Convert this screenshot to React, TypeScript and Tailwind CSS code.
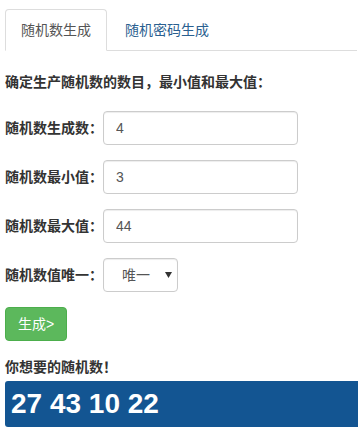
import { useState } from 'react';

const font = "font-['Liberation_Sans','Noto_Sans_CJK_SC',sans-serif]";

const fields = [
  { label: '随机数生成数：', value: '4' },
  { label: '随机数最小值：', value: '3' },
  { label: '随机数最大值：', value: '44' },
];

export default function App() {
  const [tab, setTab] = useState(0);
  const [values, setValues] = useState(fields.map((f) => f.value));
  const [unique, setUnique] = useState('唯一');

  return (
    <div className={`${font} min-h-[430px] bg-white pl-[5px] pt-[9px] text-[14px] leading-[20px] text-[#333]`}>
      {/* tabs */}
      <ul className="mr-px flex border-b border-[#ddd]">
        {['随机数生成', '随机密码生成'].map((t, i) => (
          <li key={t} className="-mb-px mr-[2px]">
            <button
              onClick={() => setTab(i)}
              className={
                i === tab
                  ? 'rounded-t-[4px] border border-[#ddd] border-b-transparent bg-white px-[15px] py-[10px] text-[#555]'
                  : 'rounded-t-[4px] border border-transparent px-[15px] py-[10px] text-[#2a6090]'
              }
            >
              {t}
            </button>
          </li>
        ))}
      </ul>

      <h5 className="mt-[21px] font-bold">确定生产随机数的数目，最小值和最大值：</h5>

      <div className="mt-[19px] flex flex-col gap-[15px]">
        {fields.map((f, i) => (
          <div key={f.label} className="grid grid-cols-[98px_auto] items-center">
            <label className="whitespace-nowrap font-bold">{f.label}</label>
            <input
              value={values[i]}
              onChange={(e) => setValues(values.map((v, j) => (j === i ? e.target.value : v)))}
              className="h-[34px] w-[195px] rounded-[4px] border border-[#ccc] px-[12px] py-[6px] text-[#555] shadow-[inset_0_1px_1px_rgba(0,0,0,0.075)] outline-none"
            />
          </div>
        ))}
        <div className="grid grid-cols-[98px_auto] items-center">
          <label className="whitespace-nowrap font-bold">随机数值唯一：</label>
          <div className="relative w-[75px]">
            <select
              value={unique}
              onChange={(e) => setUnique(e.target.value)}
              className="h-[34px] w-[75px] appearance-none rounded-[4px] border border-[#ccc] bg-white pl-[18px] pr-[20px] text-[#555] shadow-[inset_0_1px_1px_rgba(0,0,0,0.075)] outline-none"
            >
              <option>唯一</option>
              <option>不唯一</option>
            </select>
            <svg className="pointer-events-none absolute right-[6px] top-[14px]" width="7" height="6" viewBox="0 0 7 6">
              <path d="M0 0h7L3.5 6z" fill="#333" />
            </svg>
          </div>
        </div>
        <div>
          <button className="h-[34px] rounded-[4px] border border-[#4cae4c] bg-[#5cb85c] px-[12px] text-white">生成&gt;</button>
        </div>
      </div>

      <h5 className="mt-[16px] font-bold">你想要的随机数！</h5>
      <div className="mt-[4px] flex h-[46px] items-center rounded-l-[3px] bg-[#135592] pl-[6px] text-[28px] font-bold text-white">
        27 43 10 22
      </div>
    </div>
  );
}
